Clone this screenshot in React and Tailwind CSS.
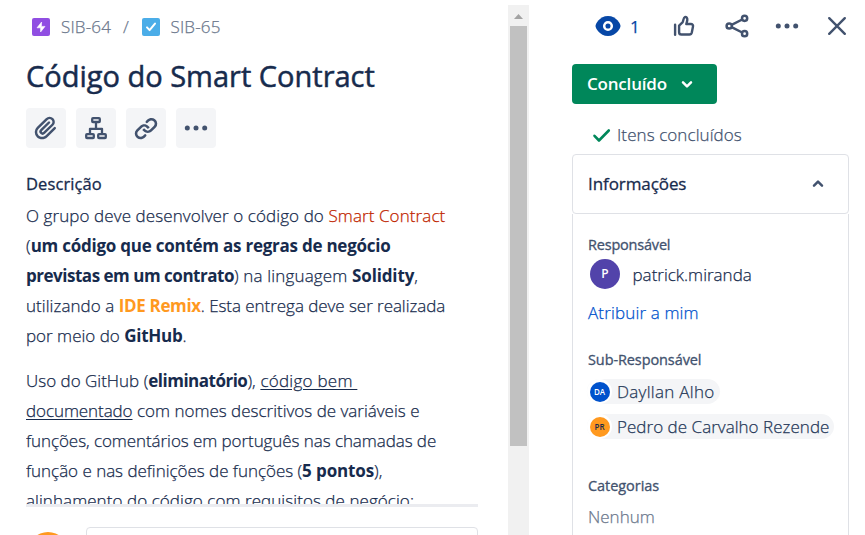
function EpicIcon() {
  return (
    <svg className="size-[18px] shrink-0" viewBox="0 0 18 18">
      <rect width="18" height="18" rx="2" fill="#904ee2" />
      <path d="M9.6 4 5 9.8h3.6V14L13 8.4H9.4Z" fill="#fff" stroke="#fff" strokeWidth=".6" strokeLinejoin="round" />
    </svg>
  );
}

function TaskIcon() {
  return (
    <svg className="size-[18px] shrink-0" viewBox="0 0 18 18">
      <rect width="18" height="18" rx="2" fill="#4bade8" />
      <path d="m5 9.4 2.6 2.7L13 5.6" fill="none" stroke="#fff" strokeWidth="2" strokeLinecap="round" strokeLinejoin="round" />
    </svg>
  );
}

function Attach() {
  return (
    <svg className="size-[30px]" viewBox="0 0 24 24" fill="#42526e">
      <path d="M11.643 17.965c-1.53 1.495-4.016 1.496-5.542.004a3.773 3.773 0 0 1 .002-5.412l7.147-6.985a2.316 2.316 0 0 1 3.233-.003c.893.873.895 2.282.004 3.153l-6.703 6.55a.653.653 0 0 1-.914-.008.62.62 0 0 1 0-.902l6.229-6.087a.941.941 0 0 0 0-1.353.995.995 0 0 0-1.384 0l-6.23 6.087a2.502 2.502 0 0 0 0 3.607 2.643 2.643 0 0 0 3.683.009l6.703-6.55a4.152 4.152 0 0 0-.004-5.858 4.269 4.269 0 0 0-6-.002L4.72 11.2a5.635 5.635 0 0 0 0 8.118c2.291 2.24 6.017 2.24 8.306.003l6.688-6.536a.941.941 0 0 0 0-1.353.995.995 0 0 0-1.384 0l-6.687 6.533z" />
    </svg>
  );
}

function Tree() {
  return (
    <svg className="size-[30px]" viewBox="0 0 30 30" fill="none" stroke="#42526e" strokeWidth="2.3">
      <rect x="11.2" y="5.2" width="7.6" height="3.8" rx=".8" />
      <rect x="5.2" y="21.2" width="7.6" height="3.8" rx=".8" />
      <rect x="17.2" y="21.2" width="7.6" height="3.8" rx=".8" />
      <path d="M15 9v6M9 21v-5.2h12V21" strokeLinejoin="round" />
    </svg>
  );
}

function LinkIcon() {
  return (
    <svg className="size-[30px]" viewBox="0 0 24 24" fill="#42526e">
      <path d="m12.856 5.457-.937.92a1.002 1.002 0 0 0 0 1.437 1.047 1.047 0 0 0 1.463 0l.984-.966c.967-.95 2.542-1.135 3.602-.288a2.54 2.54 0 0 1 .203 3.81l-2.903 2.852a2.646 2.646 0 0 1-3.696 0l-1.11-1.09L9 13.57l1.108 1.089c1.822 1.788 4.802 1.788 6.622 0l2.905-2.852a4.558 4.558 0 0 0-.357-6.82c-1.893-1.517-4.695-1.226-6.422.47" />
      <path d="m11.144 19.543.937-.92a1.002 1.002 0 0 0 0-1.437 1.047 1.047 0 0 0-1.462 0l-.985.966c-.967.95-2.542 1.135-3.602.288a2.54 2.54 0 0 1-.203-3.81l2.903-2.852a2.646 2.646 0 0 1 3.696 0l1.11 1.09L15 11.43l-1.108-1.089c-1.822-1.788-4.802-1.788-6.622 0l-2.905 2.852a4.558 4.558 0 0 0 .357 6.82c1.893 1.517 4.695 1.226 6.422-.47" />
    </svg>
  );
}

function Dots() {
  return (
    <svg className="size-[30px]" viewBox="0 0 30 30" fill="#42526e">
      <circle cx="6.3" cy="15" r="2.5" />
      <circle cx="15" cy="15" r="2.5" />
      <circle cx="23.7" cy="15" r="2.5" />
    </svg>
  );
}

function Eye() {
  return (
    <svg className="size-[30px]" viewBox="0 0 30 30">
      <path d="M15 5C6.5 5 2.5 13 2.5 15S6.5 25 15 25s12.5-8 12.5-10S23.5 5 15 5Z" fill="#0747a6" />
      <circle cx="15" cy="15" r="3.8" fill="none" stroke="#fff" strokeWidth="2.5" />
    </svg>
  );
}

function Thumb() {
  return (
    <svg className="size-[30px]" viewBox="0 0 30 30" fill="none" stroke="#42526e" strokeWidth="2.4" strokeLinecap="round" strokeLinejoin="round">
      <path d="M6.1 13.8v10" />
      <path d="M10.1 14.6 13.5 11.4c.8-.9.9-4.9 2.3-5.3 1.6-.4 2.7.9 2.5 2.7-.1 1.5-.6 2.8-1 4.2h4.6c1.5 0 2.4 1.2 2.1 2.6l-1.2 5.9c-.3 1.3-1.1 2-2.4 2h-8c-1.5 0-2.3-1-2.3-2.3Z" />
    </svg>
  );
}

function Share() {
  return (
    <svg className="size-[30px]" viewBox="0 0 30 30" fill="none" stroke="#42526e" strokeWidth="2.5">
      <circle cx="7.2" cy="15" r="2.6" />
      <circle cx="22.6" cy="7.3" r="2.6" />
      <circle cx="22.6" cy="22.7" r="2.6" />
      <path d="m9.6 13.8 10.6-5.3M9.6 16.2l10.6 5.3" />
    </svg>
  );
}

function Close() {
  return (
    <svg className="size-[30px]" viewBox="0 0 30 30" fill="none" stroke="#42526e" strokeWidth="2.4" strokeLinecap="round">
      <path d="m7.2 7.2 15.6 15.6M22.8 7.2 7.2 22.8" />
    </svg>
  );
}

function ToolButton({ children }) {
  return <div className="flex size-10 items-center justify-center rounded-[4px] bg-[#f4f5f7]">{children}</div>;
}

function B({ className = "tracking-[-0.24px]", children }) {
  return <strong className={"font-bold [-webkit-text-stroke:0] " + className}>{children}</strong>;
}

function Description() {
  return (
    <div className="flex h-[304px] shrink-0 flex-col gap-[15px] overflow-hidden text-[17px] leading-[30px] whitespace-pre">
      <div>
        <p className="tracking-[0.09px]">O grupo deve desenvolver o código do <span className="text-[#bf2600]">Smart Contract</span></p>
        <p>(<B>um código que contém as regras de negócio</B></p>
        <p className="tracking-[0.16px]"><B className="tracking-[-0.48px]">previstas em um contrato</B>) na linguagem <B className="tracking-[-0.15px]">Solidity</B>,</p>
        <p><span className="tracking-[0.05px]">utilizando a </span><B className="tracking-[-0.34px] text-[#ff991f]">IDE Remix</B><span className="tracking-[-0.05px]">. Esta entrega deve ser realizada</span></p>
        <p>por meio do <B className="tracking-[-0.25px]">GitHub</B>.</p>
      </div>
      <div>
        <p>Uso do GitHub (<B className="tracking-[-0.5px]">eliminatório</B><span className="tracking-[0.1px]">), </span><span className="tracking-[0.26px] underline underline-offset-2">código bem </span></p>
        <p><span className="tracking-[-0.08px] underline underline-offset-2">documentado</span> com nomes descritivos de variáveis e</p>
        <p className="tracking-[-0.07px]">funções, comentários em português nas chamadas de</p>
        <p className="tracking-[-0.03px]">função e nas definições de funções (<B className="tracking-[-0.12px]">5 pontos</B>),</p>
        <p className="tracking-[0.06px]">alinhamento do código com requisitos de negócio;</p>
      </div>
    </div>
  );
}

function Person({ initials, name, tone, track }) {
  return (
    <div className="flex h-[25px] w-fit items-center rounded-full bg-[#f4f5f7] pr-[5px]">
      <div className="flex size-[25px] items-center justify-center rounded-full bg-white">
        <div className={"flex size-5 items-center justify-center rounded-full text-[8px] leading-none font-semibold [-webkit-text-stroke:0] " + tone}>{initials}</div>
      </div>
      <span className={"ml-[5px] text-[17px] leading-[25px] text-[#253858] " + track}>{name}</span>
    </div>
  );
}

export default function App() {
  return (
    <div className="flex h-[535px] w-[865px] overflow-hidden bg-white font-['Open_Sans','Noto_Sans',sans-serif] font-light text-[#172b4d] [-webkit-text-stroke:0.25px]">
      <main className="flex w-[508px] shrink-0 flex-col pl-[26px]">
        <nav className="mt-[15px] flex h-6 shrink-0 items-center pl-[6px] text-[17px] leading-6 text-[#6b778c]">
          <EpicIcon />
          <span className="ml-[11px] w-[62px] tracking-[0.15px]">SIB-64</span>
          <span className="w-[19px]">/</span>
          <TaskIcon />
          <span className="ml-[10.5px] tracking-[0.15px]">SIB-65</span>
        </nav>
        <h1 className="mt-[19px] h-[35px] shrink-0 text-[29px] leading-[35px] font-normal whitespace-nowrap [-webkit-text-stroke:0.5px]">Código do Smart Contract</h1>
        <div className="mt-[15px] flex shrink-0 gap-[10px]">
          <ToolButton><Attach /></ToolButton>
          <ToolButton><Tree /></ToolButton>
          <ToolButton><LinkIcon /></ToolButton>
          <ToolButton><Dots /></ToolButton>
        </div>
        <h2 className="mt-[26px] mb-[7px] h-5 shrink-0 text-[16.5px] leading-5 font-normal tracking-[0.1px] [-webkit-text-stroke:0.3px]">Descrição</h2>
        <Description />
        <div className="-mt-px h-[3px] w-[452px] shrink-0 bg-[#ebecf0]" />
        <div className="mt-5 flex h-[80px] shrink-0 pl-[2px]">
          <div className="mt-[5px] size-10 rounded-full bg-[#ff991f]" />
          <div className="ml-[18px] h-[50px] w-[392px] rounded-[4px] border border-[#dfe1e6]" />
        </div>
      </main>
      <div className="mt-[5px] flex w-[21px] shrink-0 flex-col items-center bg-[#f1f1f1]">
        <svg className="h-[21px] w-[21px] shrink-0" viewBox="0 0 21 21"><path d="M6 14h9l-4.5-5Z" fill="#a3a3a3" /></svg>
        <div className="h-[420px] w-[17px] bg-[#c1c1c1]" />
      </div>
      <aside className="flex min-w-0 flex-1 flex-col pl-[43px]">
        <div className="mt-[11px] flex h-[30px] w-[293px] shrink-0 items-center pl-[21px]">
          <Eye />
          <span className="ml-[7px] w-[40px] text-[17px] leading-none font-normal text-[#0747a6]">1</span>
          <div className="-ml-px mr-[23px]"><Thumb /></div>
          <Share />
          <div className="ml-5"><Dots /></div>
          <div className="ml-5"><Close /></div>
        </div>
        <button className="mt-[23px] flex h-10 w-[145px] shrink-0 items-center rounded-[4px] bg-[#00875a] pl-[15px] text-[17px] font-semibold text-white [-webkit-text-stroke:0]">
          <span className="w-[92px] text-left tracking-[-0.2px]">Concluído</span>
          <svg className="size-4" viewBox="0 0 16 16" fill="none" stroke="#fff" strokeWidth="2.5" strokeLinecap="round" strokeLinejoin="round"><path d="m4 6.4 4 4 4-4" /></svg>
        </button>
        <div className="mt-[20px] flex h-[22px] shrink-0 items-center pl-5 text-[17px] text-[#42526e]">
          <svg className="size-5" viewBox="0 0 20 20" fill="none" stroke="#00875a" strokeWidth="2.6" strokeLinecap="round" strokeLinejoin="round"><path d="M2.5 10.8 7 15.5 16.8 5.500" /></svg>
          <span className="ml-[5px] leading-[22px] tracking-[0.08px]">Itens concluídos</span>
        </div>
        <section className="mt-[8px] flex w-[277px] flex-1 flex-col">
          <header className="flex h-[60px] shrink-0 items-center justify-between rounded-[4px] border border-[#dfe1e6] pr-[22px] pl-[15px]">
            <span className="text-[17px] font-normal tracking-[-0.08px] [-webkit-text-stroke:0.3px]">Informações</span>
            <svg className="size-4" viewBox="0 0 16 16" fill="none" stroke="#42526e" strokeWidth="2.5" strokeLinecap="round" strokeLinejoin="round"><path d="m4 9.6 4-4 4 4" /></svg>
          </header>
          <div className="flex flex-1 flex-col border-x border-[#dfe1e6] pl-[15px] whitespace-nowrap">
            <span className="mt-[21px] h-5 text-[14.5px] leading-5 font-normal tracking-[-0.2px] text-[#42526e] [-webkit-text-stroke:0.3px]">Responsável</span>
            <div className="mt-[4px] flex h-[30px] items-center pl-[2px]">
              <div className="flex size-[30px] items-center justify-center rounded-full bg-[#5243aa] text-[12px] font-semibold text-white [-webkit-text-stroke:0]">P</div>
              <span className="ml-[12.5px] pt-px text-[17px]">patrick.miranda</span>
            </div>
            <span className="mt-[11px] h-[26px] text-[17px] leading-[26px] tracking-[0.15px] text-[#0052cc]">Atribuir a mim</span>
            <span className="mt-[24px] h-5 text-[14.5px] leading-5 font-normal tracking-[-0.1px] text-[#42526e] [-webkit-text-stroke:0.3px]">Sub-Responsável</span>
            <div className="mt-[9px] -ml-px flex flex-col gap-[10px]">
              <Person initials="DA" name="Dayllan Alho" tone="bg-[#0052cc] text-white" track="tracking-[0.3px]" />
              <Person initials="PR" name="Pedro de Carvalho Rezende" tone="bg-[#ff991f] text-[#172b4d]" track="tracking-[0.03px]" />
            </div>
            <span className="mt-[37px] h-5 text-[14.5px] leading-5 font-normal tracking-[-0.05px] text-[#42526e] [-webkit-text-stroke:0.3px]">Categorias</span>
            <span className="mt-[9px] h-6 text-[17px] leading-6 text-[#6b778c]">Nenhum</span>
          </div>
        </section>
      </aside>
    </div>
  );
}
